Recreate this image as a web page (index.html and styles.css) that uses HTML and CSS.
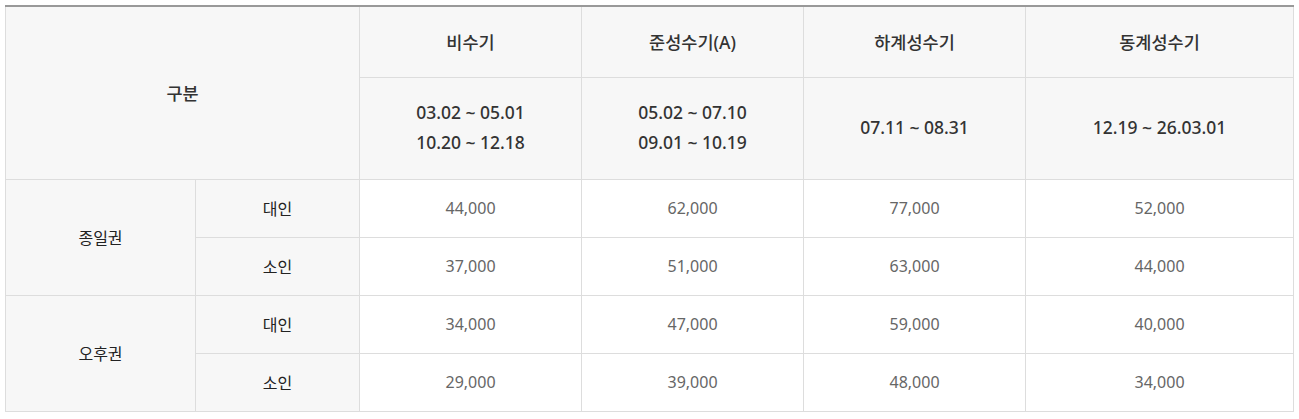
FILE: index.html
```html
<!DOCTYPE html>
<html lang="ko">
<head>
<meta charset="utf-8">
<link rel="stylesheet" href="styles.css">
</head>
<body>
<div class="wrap">
<table class="price">
  <colgroup>
    <col class="c-a"><col class="c-b"><col class="c-n"><col class="c-n"><col class="c-n"><col class="c-l">
  </colgroup>
  <thead>
    <tr class="h1">
      <th colspan="2" rowspan="2" class="hd">구분</th>
      <th class="hd">비수기</th>
      <th class="hd">준성수기(A)</th>
      <th class="hd">하계성수기</th>
      <th class="hd">동계성수기</th>
    </tr>
    <tr class="h2">
      <th class="hd date">03.02 ~ 05.01<br>10.20 ~ 12.18</th>
      <th class="hd date">05.02 ~ 07.10<br>09.01 ~ 10.19</th>
      <th class="hd date">07.11 ~ 08.31</th>
      <th class="hd date">12.19 ~ 26.03.01</th>
    </tr>
  </thead>
  <tbody>
    <tr>
      <th rowspan="2" class="lb">종일권</th>
      <th class="lb">대인</th>
      <td>44,000</td><td>62,000</td><td>77,000</td><td>52,000</td>
    </tr>
    <tr>
      <th class="lb">소인</th>
      <td>37,000</td><td>51,000</td><td>63,000</td><td>44,000</td>
    </tr>
    <tr>
      <th rowspan="2" class="lb">오후권</th>
      <th class="lb">대인</th>
      <td>34,000</td><td>47,000</td><td>59,000</td><td>40,000</td>
    </tr>
    <tr>
      <th class="lb">소인</th>
      <td>29,000</td><td>39,000</td><td>48,000</td><td>34,000</td>
    </tr>
  </tbody>
</table>
</div>
</body>
</html>
```
FILE: styles.css
```css
html, body {
  margin: 0;
  padding: 0;
  background: #fff;
}
.wrap {
  padding: 5px 0 0 5px;
}
.price {
  width: 1288px;
  border-collapse: collapse;
  table-layout: fixed;
  border-top: 2px solid #999;
  font-family: "Noto Sans", "Noto Sans CJK KR", sans-serif;
}
.c-a { width: 190px; }
.c-b { width: 164px; }
.c-n { width: 222px; }
.c-l { width: 268px; }
.price th, .price td {
  border: 1px solid #ddd;
  text-align: center;
  vertical-align: middle;
  padding: 0;
}
.price thead th {
  background: #f7f7f7;
  color: #333;
  font-size: 17.5px;
  font-weight: 500;
}
.h1 { height: 71px; }
.h2 { height: 102px; }
.price .date {
  font-size: 17.5px;
  line-height: 30px;
  font-weight: 500;
  padding-bottom: 2px;
}
.price tbody tr { height: 58px; }
.price .lb {
  background: #f7f7f7;
  color: #222;
  font-size: 16px;
  font-weight: 400;
}
.price td {
  background: #fff;
  color: #666;
  font-size: 16px;
}
```
